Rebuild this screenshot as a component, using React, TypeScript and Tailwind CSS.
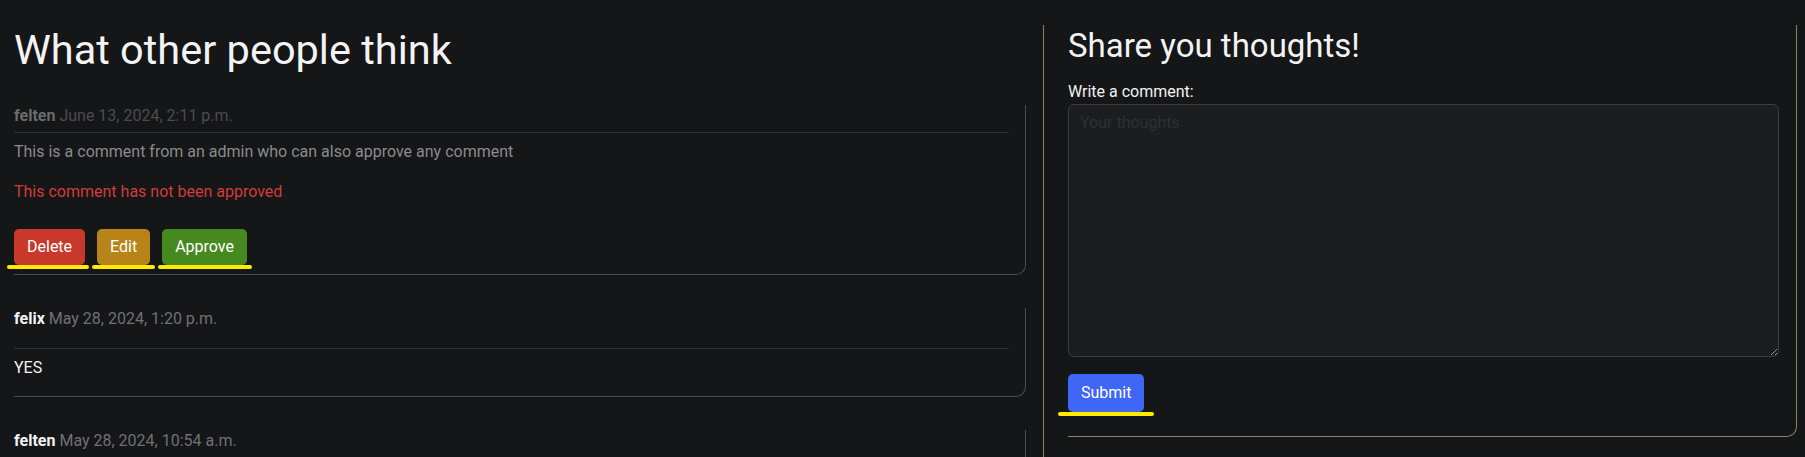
import React from "react";

const body = "font-['Roboto','Liberation_Sans',sans-serif]";
const display = "font-['Roboto','Open_Sans',sans-serif]";

function Marked({ children, left, right }: { children: React.ReactNode; left: string; right: string }) {
  // yellow annotation stroke drawn under a button
  return (
    <span className="relative inline-block">
      {children}
      <span className={`absolute top-full h-[4px] rounded-full bg-[#ffea00] ${left} ${right}`} />
    </span>
  );
}

function Meta({ user, date, faded }: { user: string; date: string; faded?: boolean }) {
  return (
    <div className={`text-[16px] leading-[22px] ${faded ? display : body}`}>
      <span className={`font-bold ${faded ? "text-[#6a6b6c]" : "text-[#f2f2f2]"}`}>{user}</span>{" "}
      <span className={faded ? "text-[#4b4c4e]" : "text-[#707173]"}>{date}</span>
    </div>
  );
}

export default function App() {
  return (
    <div className={`min-h-screen bg-[#151618] flex ${body}`}>
      {/* comments */}
      <div className="w-[1043px] shrink-0 pl-[14px] pr-[17px] pt-[26px] pb-[40px]">
        <h1 className={`${display} text-[41.5px] leading-[48px] font-normal text-[#f3f3f3] mb-[31px]`}>
          What other people think
        </h1>

        <div className="border-r border-b border-[#4a4b4d] rounded-br-[10px] pr-[16px] pb-[9px]">
          <Meta user="felten" date="June 13, 2024, 2:11 p.m." faded />
          <div className="mt-[5px] border-t border-[#2e2f31] pt-[7px]">
            <p className="text-[16px] leading-[24px] text-[#8a8b8c]">
              This is a comment from an admin who can also approve any comment
            </p>
            <p className="mt-[16px] text-[16px] leading-[24px] text-[#d23b3b]">This comment has not been approved</p>
            <div className="mt-[25px] flex gap-[12px]">
              <Marked left="-left-[7px]" right="-right-[4px]">
                <button className="h-[36px] px-[13px] rounded-[5px] bg-[#c9392b] text-white text-[16px]">Delete</button>
              </Marked>
              <Marked left="-left-[5px]" right="-right-[5px]">
                <button className="h-[36px] px-[13px] rounded-[5px] bg-[#b8841a] text-white text-[16px]">Edit</button>
              </Marked>
              <Marked left="-left-[4px]" right="-right-[5px]">
                <button className="h-[36px] px-[13px] rounded-[5px] bg-[#46891f] text-white text-[16px]">Approve</button>
              </Marked>
            </div>
          </div>
        </div>

        <div className="mt-[33px] border-r border-b border-[#4a4b4d] rounded-br-[10px] pr-[16px] pb-[16px]">
          <Meta user="felix" date="May 28, 2024, 1:20 p.m." />
          <div className="mt-[18px] border-t border-[#2e2f31] pt-[7px]">
            <p className="text-[16px] leading-[24px] text-[#f2f2f2]">YES</p>
          </div>
        </div>

        <div className="mt-[33px] border-r border-b border-[#4a4b4d] rounded-br-[10px] pr-[16px] pb-[16px]">
          <Meta user="felten" date="May 28, 2024, 10:54 a.m." />
          <div className="mt-[18px] border-t border-[#2e2f31] pt-[7px]">
            <div className="h-[24px]" />
          </div>
        </div>
      </div>

      {/* form */}
      <div className="flex-1 mt-[25px] mr-[8px] border-l border-[#8a8268] pl-[24px]">
        <form
          className="border-r border-b border-[#8a8268] rounded-br-[10px] pr-[17px] pb-[24px]"
          onSubmit={(e) => e.preventDefault()}
        >
          <h2 className={`${display} text-[33px] leading-[42px] font-normal text-[#f3f3f3]`}>Share you thoughts!</h2>
          <label className="block mt-[13px] text-[16px] leading-[24px] text-[#f2f2f2]">Write a comment:</label>
          <textarea
            placeholder="Your thoughts"
            className="block w-full h-[253px] rounded-[6px] border border-[#3c3d40] bg-[#1c1d1f] px-[11px] py-[6px] text-[16px] text-[#e5e5e5] placeholder:text-[#2f3033] outline-none"
          />
          <div className="mt-[17px]">
            <Marked left="-left-[10px]" right="-right-[10px]">
              <button className="h-[38px] px-[13px] rounded-[5px] bg-[#4066f5] text-white text-[16px]">Submit</button>
            </Marked>
          </div>
        </form>
      </div>
    </div>
  );
}
